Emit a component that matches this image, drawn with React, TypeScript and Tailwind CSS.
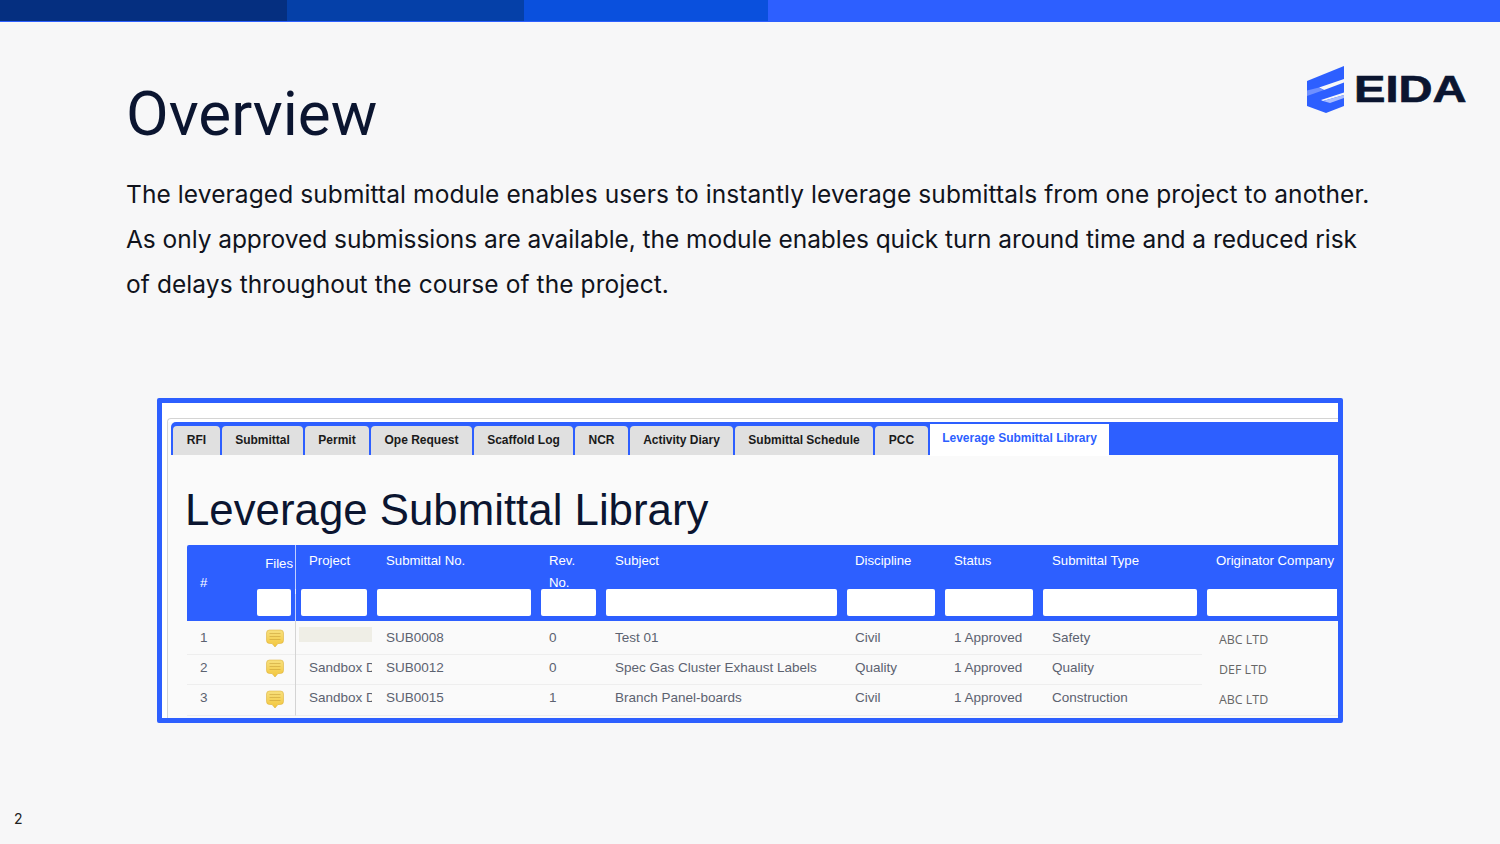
const tabs = ['RFI', 'Submittal', 'Permit', 'Ope Request', 'Scaffold Log', 'NCR', 'Activity Diary', 'Submittal Schedule', 'PCC'];

const tabWidths: Record<string, string> = {
  RFI: 'w-[47px]',
  Submittal: 'w-[81px]',
  Permit: 'w-[64px]',
  'Ope Request': 'w-[101px]',
  'Scaffold Log': 'w-[99px]',
  NCR: 'w-[53px]',
  'Activity Diary': 'w-[103px]',
  'Submittal Schedule': 'w-[138px]',
  PCC: 'w-[53px]',
};

const columns = 'grid grid-cols-[65px_44px_76px_164px_65px_241px_98px_98px_164px_136px]';

const rows = [
  { n: 1, project: '', no: 'SUB0008', rev: '0', subject: 'Test 01', discipline: 'Civil', type: 'Safety', company: 'ABC LTD' },
  { n: 2, project: 'Sandbox D', no: 'SUB0012', rev: '0', subject: 'Spec Gas Cluster Exhaust Labels', discipline: 'Quality', type: 'Quality', company: 'DEF LTD' },
  { n: 3, project: 'Sandbox D', no: 'SUB0015', rev: '1', subject: 'Branch Panel-boards', discipline: 'Civil', type: 'Construction', company: 'ABC LTD' },
];

function Logo() {
  return (
    <div className="flex items-center gap-[10px] self-start">
      <svg width="37" height="47" viewBox="0 0 37 47">
        <path d="M0 15L37 0V40L19 47L0 40Z" fill="#2d5fff" />
        <path d="M37 13V16.5L17 24L12 21.5Z" fill="#f7f7f8" />
        <path d="M0 24.5L12 21.5L17 24L0 30Z" fill="#6f90ff" />
        <path d="M37 26.5V29L16 35L14 34Z" fill="#f7f7f8" />
        <path d="M16 35L37 29V32L23 37Z" fill="#a9bdff" />
      </svg>
      <div className="w-[113px] h-[30px]">
        <span className="inline-block origin-left scale-x-[1.31] font-['Liberation_Sans',sans-serif] font-bold text-[36px] leading-[30px] text-[#0b1530] [-webkit-text-stroke:0.6px_#0b1530]">
          EIDA
        </span>
      </div>
    </div>
  );
}

function NoteIcon() {
  return (
    <svg width="18" height="19" viewBox="0 0 18 19">
      <defs>
        <linearGradient id="note" x1="0" y1="0" x2="0" y2="1">
          <stop offset="0" stopColor="#f7e07e" />
          <stop offset="1" stopColor="#f3c63c" />
        </linearGradient>
      </defs>
      <path d="M3.5 1H14.5A3 3 0 0 1 17.5 4V11.5A3 3 0 0 1 14.5 14.5H12L9 18L6 14.5H3.5A3 3 0 0 1 0.5 11.5V4A3 3 0 0 1 3.5 1Z" fill="url(#note)" stroke="#d9a92c" strokeWidth="0.5" />
      <path d="M3.5 4.5H14.5M3.5 7.5H14.5M3.5 10.5H14.5" stroke="#b98f2a" strokeOpacity="0.55" strokeWidth="0.8" />
    </svg>
  );
}

export default function App() {
  return (
    <div className="w-[1500px] h-[844px] overflow-hidden flex flex-col bg-[#f7f7f8] text-[#0b1530] font-['Liberation_Sans',sans-serif]">
      <div className="h-[22px] flex shrink-0 border-b border-[#2d5fff]">
        <div className="w-[287px] bg-[#052f80]" />
        <div className="w-[237px] bg-[#0540a8]" />
        <div className="w-[244px] bg-[#0a50dd]" />
        <div className="flex-1 bg-[#2d5fff]" />
      </div>

      <div className="flex justify-between pl-[126px] pr-[33px] pt-[44px] h-[130px] shrink-0">
        <h1 className="font-['Roboto',sans-serif] font-normal text-[62px] leading-[70px] mt-[13px]">Overview</h1>
        <Logo />
      </div>

      <div className="pl-[126px] pt-[20px] h-[246px] shrink-0 font-['Inter',sans-serif] text-[24.5px] leading-[45px] text-[#10131c] whitespace-nowrap">
        <p className="tracking-[0.09px]">The leveraged submittal module enables users to instantly leverage submittals from one project to another.</p>
        <p className="tracking-[-0.05px]">As only approved submissions are available, the module enables quick turn around time and a reduced risk</p>
        <p className="tracking-[0.08px]">of delays throughout the course of the project.</p>
      </div>

      <div className="ml-[157px] w-[1186px] h-[325px] shrink-0 border-[5px] border-[#2d5fff] rounded-[2px] bg-white flex flex-col overflow-hidden">
        <div className="h-[19px] shrink-0 pl-[5px] pt-[15px]">
          <div className="h-[4px] border-t border-l border-[#d4d4d4] rounded-tl-[5px]" />
        </div>
        <div className="flex flex-1 min-h-0 pl-[5px]">
          <div className="flex-1 min-w-0 flex flex-col border-l border-[#d4d4d4] bg-[#fafafa] pl-[3px]">
            <div className="h-[33px] shrink-0 bg-[#2d5fff] rounded-tl-[5px] flex items-end pl-[2px] gap-[2px]">
              {tabs.map((tab) => (
                <div key={tab} className={`${tabWidths[tab]} h-[29px] shrink-0 bg-[#e0e0e0] rounded-t-[4px] flex items-center justify-center pb-[2px] text-[12px] font-bold text-[#1a1a1a]`}>
                  {tab}
                </div>
              ))}
              <div className="w-[179px] h-[32px] mb-[-1px] shrink-0 bg-white flex items-center justify-center pb-[5px] text-[12px] font-bold text-[#2d5fff]">
                Leverage Submittal Library
              </div>
            </div>

            <h2 className="h-[90px] shrink-0 pl-[14px] pt-[30px] text-[43.8px] leading-[50px] font-normal text-[#0b1530] whitespace-nowrap">
              Leverage Submittal Library
            </h2>

            <div className="ml-[16px] flex-1 min-h-0">
              <div className="bg-[#2d5fff] h-[76px] rounded-tl-[2px] text-white text-[13.2px]">
                <div className={`${columns} h-[44px]`}>
                  <div className="pl-[13px] pt-[30px] leading-[16px]">#</div>
                  <div className="pt-[11px] leading-[16px] text-right pr-[2px] border-r border-white/70">Files</div>
                  <div className="pl-[13px] pt-[8px] leading-[16px]">Project</div>
                  <div className="pl-[14px] pt-[8px] leading-[16px]">Submittal No.</div>
                  <div className="pl-[13px] pt-[5px] leading-[22px]">Rev.<br />No.</div>
                  <div className="pl-[14px] pt-[8px] leading-[16px]">Subject</div>
                  <div className="pl-[13px] pt-[8px] leading-[16px]">Discipline</div>
                  <div className="pl-[14px] pt-[8px] leading-[16px]">Status</div>
                  <div className="pl-[14px] pt-[8px] leading-[16px]">Submittal Type</div>
                  <div className="pl-[14px] pt-[8px] leading-[16px] whitespace-nowrap">Originator Company</div>
                </div>
                <div className={columns}>
                  <div />
                  <div className="pl-[5px] pr-[4px] border-r border-white/70 h-[32px]"><div className="h-[27px] bg-white rounded-[2px]" /></div>
                  <div className="pl-[5px] pr-[5px]"><div className="h-[27px] bg-white rounded-[2px]" /></div>
                  <div className="pl-[5px] pr-[5px]"><div className="h-[27px] bg-white rounded-[2px]" /></div>
                  <div className="pl-[5px] pr-[5px]"><div className="h-[27px] bg-white rounded-[2px]" /></div>
                  <div className="pl-[5px] pr-[5px]"><div className="h-[27px] bg-white rounded-[2px]" /></div>
                  <div className="pl-[5px] pr-[5px]"><div className="h-[27px] bg-white rounded-[2px]" /></div>
                  <div className="pl-[5px] pr-[5px]"><div className="h-[27px] bg-white rounded-[2px]" /></div>
                  <div className="pl-[5px] pr-[5px]"><div className="h-[27px] bg-white rounded-[2px]" /></div>
                  <div className="pl-[5px] pr-[1px]"><div className="h-[27px] bg-white rounded-l-[2px]" /></div>
                </div>
              </div>

              <div className="ml-[108px] w-px h-[2px] bg-[#d4d4d4]" />
              {rows.map((row) => (
                <div key={row.n} className={`${columns} h-[30px] text-[13.5px] leading-[30px] text-[#5c6270]`}>
                  <div className="pl-[13px] border-b border-[#eeeeee]">{row.n}</div>
                  <div className="flex items-center pl-[14px] border-r border-b border-r-[#d4d4d4] border-b-[#eeeeee]"><NoteIcon /></div>
                  <div className="pl-[13px] pr-[4px] border-b border-[#eeeeee] overflow-hidden whitespace-nowrap">
                    {row.project ? row.project : <div className="ml-[-10px] mt-[4px] w-[73px] h-[15px] bg-[#efeee6]" />}
                  </div>
                  <div className="pl-[14px] border-b border-[#eeeeee]">{row.no}</div>
                  <div className="pl-[13px] border-b border-[#eeeeee]">{row.rev}</div>
                  <div className="pl-[14px] border-b border-[#eeeeee] whitespace-nowrap">{row.subject}</div>
                  <div className="pl-[13px] border-b border-[#eeeeee]">{row.discipline}</div>
                  <div className="pl-[14px] border-b border-[#eeeeee]">1 Approved</div>
                  <div className="pl-[14px] border-b border-[#eeeeee]">{row.type}</div>
                  <div className={`pl-[17px] pt-[2px] font-['Open_Sans',sans-serif] text-[12.4px] text-[#666666] ${row.n === 3 ? 'border-b border-[#eeeeee]' : ''}`}>{row.company}</div>
                </div>
              ))}
              <div className="ml-[108px] w-px h-[3px] bg-[#d4d4d4]" />
            </div>
          </div>
        </div>
      </div>

      <div className="pl-[14px] pt-[87px] text-[14px] leading-[18px] font-['Inter',sans-serif] text-[#222222]">2</div>
    </div>
  );
}
